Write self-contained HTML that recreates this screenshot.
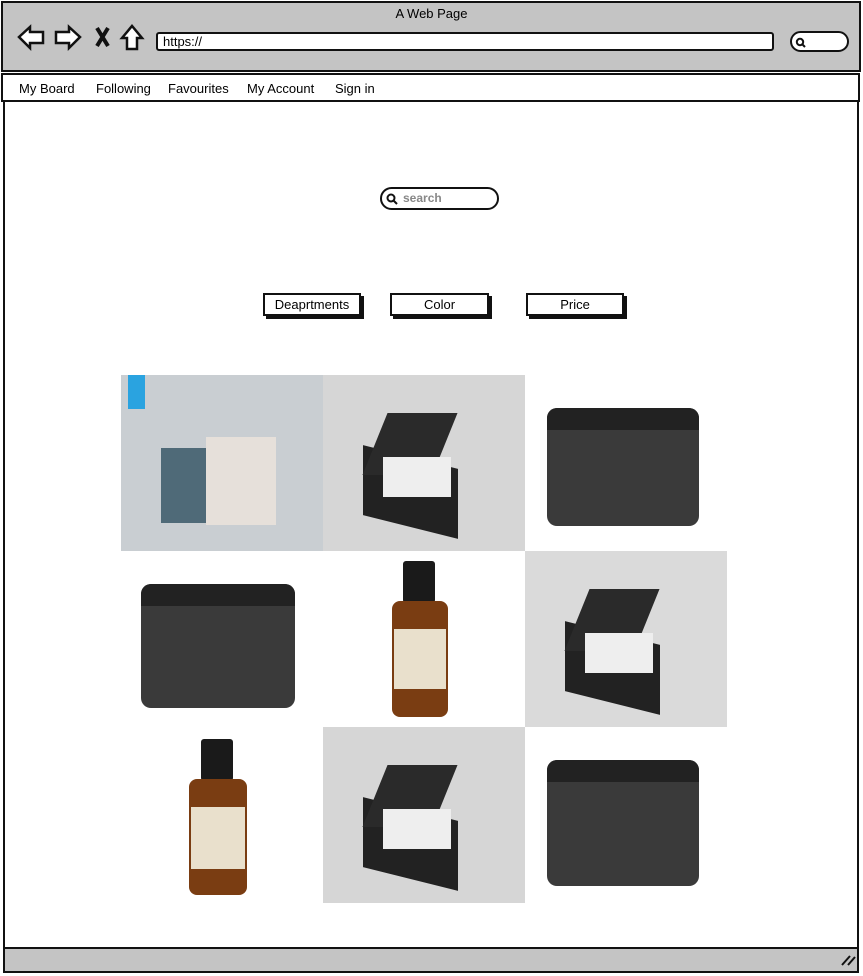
<!DOCTYPE html><html><head><style>
*{box-sizing:border-box;margin:0;padding:0}
body{width:863px;height:976px;background:#fff;position:relative;overflow:hidden;font-family:"Liberation Sans",sans-serif;color:#000}
.a{position:absolute}
.top{left:1px;top:1px;width:860px;height:71px;background:#c4c4c4;border:2px solid #111}
.title{left:0;width:863px;top:6px;text-align:center;font-size:13px}
.url{left:156px;top:32px;width:618px;height:19px;background:#fff;border:2px solid #111;border-radius:3px;font-size:13px;padding-left:5px;line-height:15px}
.srch{left:790px;top:31px;width:59px;height:21px;background:#fff;border:2px solid #111;border-radius:11px}
.nav{left:1px;top:73px;width:859px;height:29px;border:2px solid #111;font-size:13px}
.nav span{position:absolute;top:6px}
.frame{left:3px;top:102px;width:856px;height:846px;border-left:2px solid #111;border-right:2px solid #111}
.bot{left:3px;top:947px;width:856px;height:26px;background:#c4c4c4;border:2px solid #111}
.sbox{left:380px;top:187px;width:119px;height:23px;border:2px solid #111;border-radius:12px;font-size:12px;color:#888;padding-left:21px;line-height:19px;font-weight:bold}
.btn{height:23px;border:2px solid #111;box-shadow:3px 3px 0 #111;font-size:13px;text-align:center;line-height:19px;top:293px;background:#fff}
.cell{width:202px;height:176px;overflow:hidden}
</style></head><body>
<div class="a top"></div>
<div class="a title">A Web Page</div>
<svg class="a" style="left:16px;top:24px" width="130" height="28" viewBox="0 0 130 28" fill="#fff" stroke="#111" stroke-width="2.5">
<path d="M3 13 L14 3 L14 8 L27 8 L27 19 L14 19 L14 24 Z"/>
<path d="M64 13 L53 3 L53 8 L40 8 L40 19 L53 19 L53 24 Z"/>
<path d="M81 4 L92 22 M92 4 L81 22" stroke-width="4"/>
<path d="M106 14 L116 2 L126 14 L121 14 L121 25 L111 25 L111 14 Z"/>
</svg>
<div class="a url">https://</div>
<div class="a srch"></div>
<svg class="a" style="left:795px;top:37px" width="12" height="12"><circle cx="5" cy="5" r="3.2" fill="none" stroke="#111" stroke-width="2"/><path d="M7 7 L10 10" stroke="#111" stroke-width="2"/></svg>
<div class="a nav"><span style="left:16px">My Board</span><span style="left:93px">Following</span><span style="left:165px">Favourites</span><span style="left:244px">My Account</span><span style="left:332px">Sign in</span></div>
<div class="a frame"></div>
<div class="a bot"></div>
<svg class="a" style="left:840px;top:953px" width="16" height="14"><path d="M2 12 L10 3 M8 12 L15 4" stroke="#111" stroke-width="2"/></svg>
<div class="a sbox">search</div>
<svg class="a" style="left:386px;top:193px" width="12" height="12"><circle cx="5" cy="5" r="3.5" fill="none" stroke="#111" stroke-width="2"/><path d="M7.5 7.5 L11 11" stroke="#111" stroke-width="2"/></svg>
<div class="a btn" style="left:263px;width:98px">Deaprtments</div>
<div class="a btn" style="left:390px;width:99px">Color</div>
<div class="a btn" style="left:526px;width:98px">Price</div>

<!-- row1 -->
<div class="a cell" style="left:121px;top:375px;background:#c9ced2">
<div class="a" style="left:7px;top:0;width:17px;height:34px;background:#2aa3e0"></div>
<div class="a" style="left:40px;top:73px;width:60px;height:75px;background:#4f6a78"></div>
<div class="a" style="left:85px;top:62px;width:70px;height:88px;background:#e6e0da"></div>
</div>
<div class="a cell" style="left:323px;top:375px;background:#d6d6d6">
<div class="a" style="left:40px;top:82px;width:95px;height:70px;background:#222;transform:skewY(14deg)"></div>
<div class="a" style="left:52px;top:38px;width:70px;height:62px;background:#2a2a2a;transform:skewX(-22deg)"></div>
<div class="a" style="left:60px;top:82px;width:68px;height:40px;background:#eee"></div>
</div>
<div class="a cell" style="left:525px;top:375px;background:#fff">
<div class="a" style="left:22px;top:33px;width:152px;height:118px;background:#3a3a3a;border-radius:10px"></div>
<div class="a" style="left:22px;top:33px;width:152px;height:22px;background:#222;border-radius:10px 10px 0 0"></div>
</div>
<!-- row2 -->
<div class="a cell" style="left:121px;top:551px;background:#fff">
<div class="a" style="left:20px;top:33px;width:154px;height:124px;background:#3a3a3a;border-radius:10px"></div>
<div class="a" style="left:20px;top:33px;width:154px;height:22px;background:#222;border-radius:10px 10px 0 0"></div>
</div>
<div class="a cell" style="left:323px;top:551px;background:#fff">
<div class="a" style="left:80px;top:10px;width:32px;height:42px;background:#1a1a1a;border-radius:3px"></div>
<div class="a" style="left:69px;top:50px;width:56px;height:116px;background:#7a3d12;border-radius:8px"></div>
<div class="a" style="left:71px;top:78px;width:52px;height:60px;background:#e9e0cc"></div>
</div>
<div class="a cell" style="left:525px;top:551px;background:#dadada">
<div class="a" style="left:40px;top:82px;width:95px;height:70px;background:#222;transform:skewY(14deg)"></div>
<div class="a" style="left:52px;top:38px;width:70px;height:62px;background:#2a2a2a;transform:skewX(-22deg)"></div>
<div class="a" style="left:60px;top:82px;width:68px;height:40px;background:#eee"></div>
</div>
<!-- row3 -->
<div class="a cell" style="left:121px;top:727px;background:#fff">
<div class="a" style="left:80px;top:12px;width:32px;height:42px;background:#1a1a1a;border-radius:3px"></div>
<div class="a" style="left:68px;top:52px;width:58px;height:116px;background:#7a3d12;border-radius:8px"></div>
<div class="a" style="left:70px;top:80px;width:54px;height:62px;background:#e9e0cc"></div>
</div>
<div class="a cell" style="left:323px;top:727px;background:#d6d6d6">
<div class="a" style="left:40px;top:82px;width:95px;height:70px;background:#222;transform:skewY(14deg)"></div>
<div class="a" style="left:52px;top:38px;width:70px;height:62px;background:#2a2a2a;transform:skewX(-22deg)"></div>
<div class="a" style="left:60px;top:82px;width:68px;height:40px;background:#eee"></div>
</div>
<div class="a cell" style="left:525px;top:727px;background:#fff">
<div class="a" style="left:22px;top:33px;width:152px;height:126px;background:#3a3a3a;border-radius:10px"></div>
<div class="a" style="left:22px;top:33px;width:152px;height:22px;background:#222;border-radius:10px 10px 0 0"></div>
</div>
</body></html>
